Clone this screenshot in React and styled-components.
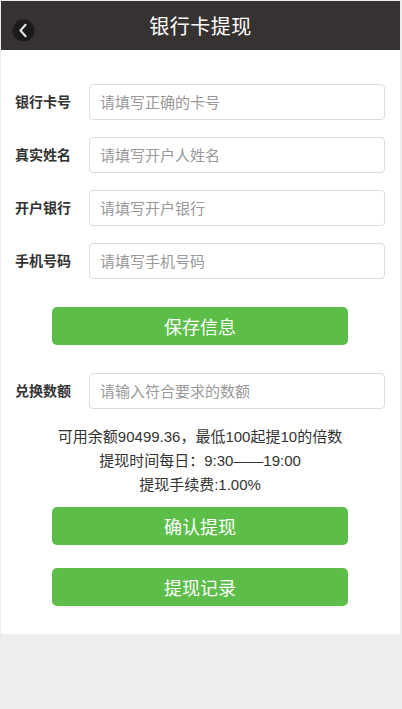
import styled, { createGlobalStyle } from "styled-components";

const GlobalStyle = createGlobalStyle`
  html, body {
    margin: 0;
    padding: 0;
    background: #ededed;
    font-family: "Liberation Sans", Arial, "Noto Sans CJK SC", sans-serif;
  }
`;

const fields = [
  { label: "银行卡号", placeholder: "请填写正确的卡号" },
  { label: "真实姓名", placeholder: "请填写开户人姓名" },
  { label: "开户银行", placeholder: "请填写开户银行" },
  { label: "手机号码", placeholder: "请填写手机号码" },
];

const BackIcon = () => (
  <svg width="23" height="23" viewBox="0 0 22 22">
    <circle cx="11" cy="11" r="10.5" fill="#1c1b1a" />
    <path
      d="M13 5.5 L8 11 L13 16.5"
      fill="none"
      stroke="#e6e6e6"
      strokeWidth="2"
      strokeLinecap="round"
      strokeLinejoin="round"
    />
  </svg>
);

const App = () => {
  return (
    <Page>
      <GlobalStyle />
      <Header>
        <BackButton>
          <BackIcon />
        </BackButton>
        <Title>银行卡提现</Title>
      </Header>
      <Content>
        <FormGroup>
          {fields.map(({ label, placeholder }) => (
            <Row key={label}>
              <Label>{label}</Label>
              <Input type="text" placeholder={placeholder} />
            </Row>
          ))}
        </FormGroup>
        <GreenButton $top={28}>保存信息</GreenButton>
        <Row $top={28}>
          <Label>兑换数额</Label>
          <Input type="text" placeholder="请输入符合要求的数额" />
        </Row>
        <Notes>
          <p>可用余额90499.36，最低100起提10的倍数</p>
          <p>提现时间每日：9:30——19:00</p>
          <p>提现手续费:1.00%</p>
        </Notes>
        <GreenButton $top={10}>确认提现</GreenButton>
        <GreenButton $top={23}>提现记录</GreenButton>
      </Content>
    </Page>
  );
};

const Page = styled.div`
  width: 399px;
  margin-left: 1px;
  min-height: 709px;
  background: #ededed;
`;

const Header = styled.div`
  position: relative;
  height: 49px;
  margin-top: 1px;
  background: #363231;
  display: flex;
  align-items: center;
  justify-content: center;
`;

const BackButton = styled.div`
  position: absolute;
  left: 11px;
  top: 18px;
  width: 23px;
  height: 23px;
  display: flex;
`;

const Title = styled.h1`
  margin: 0;
  color: #fff;
  font-size: 20px;
  font-weight: normal;
  letter-spacing: 0.5px;
`;

const Content = styled.div`
  background: #fff;
  padding: 34px 15px 28px 14px;
  display: flex;
  flex-direction: column;
`;

const FormGroup = styled.div`
  display: flex;
  flex-direction: column;
  gap: 17px;
`;

const Row = styled.div`
  display: flex;
  align-items: flex-start;
  margin-top: ${({ $top }) => ($top ? `${$top}px` : "0")};
`;

const Label = styled.label`
  width: 74px;
  flex-shrink: 0;
  padding-top: 7px;
  font-size: 14px;
  font-weight: bold;
  color: #333;
`;

const Input = styled.input`
  flex: 1;
  height: 36px;
  box-sizing: border-box;
  border: 1px solid #dcdcdc;
  border-radius: 4px;
  padding: 0 10px;
  font-size: 15px;
  font-family: inherit;
  color: #333;
  outline: none;
  &::placeholder {
    color: #999;
  }
`;

const GreenButton = styled.button`
  align-self: center;
  width: 296px;
  height: 38px;
  margin-top: ${({ $top }) => $top}px;
  border: none;
  border-radius: 5px;
  background: #5cbe49;
  color: #fff;
  font-size: 18px;
  font-family: inherit;
  cursor: pointer;
`;

const Notes = styled.div`
  margin-top: 16px;
  text-align: center;
  color: #333;
  font-size: 15px;
  line-height: 24px;
  p {
    margin: 0;
  }
`;

export default App;
